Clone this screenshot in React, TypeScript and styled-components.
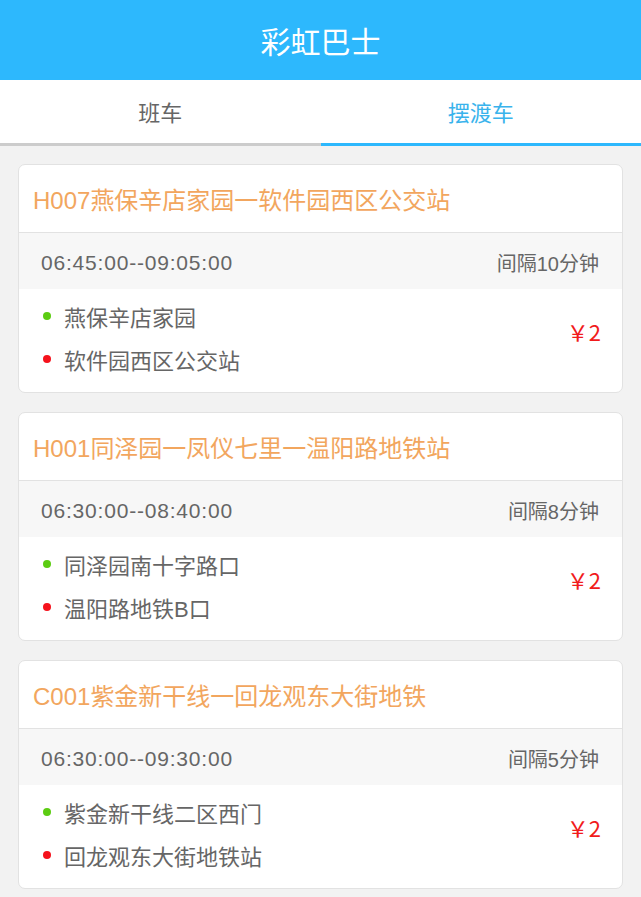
import styled, { createGlobalStyle } from "styled-components";

// colors
const colorPrimary = "#2db8fd";
const colorTitle = "#f2a65e";
const colorText = "#666666";
const colorPrice = "#f11b1b";
const colorBg = "#f2f2f2";

const GlobalStyle = createGlobalStyle`
  body {
    margin: 0;
    background: ${colorBg};
    font-family: "Liberation Sans", "Noto Sans CJK SC", sans-serif;
  }
`;

interface IStop {
  name: string;
  kind: "start" | "end";
}

interface IRoute {
  id: string;
  name: string;
  time: string;
  interval: string;
  price: number;
  stops: IStop[];
}

const routes: IRoute[] = [
  {
    id: "H007",
    name: "H007燕保辛店家园一软件园西区公交站",
    time: "06:45:00--09:05:00",
    interval: "间隔10分钟",
    price: 2,
    stops: [
      { name: "燕保辛店家园", kind: "start" },
      { name: "软件园西区公交站", kind: "end" },
    ],
  },
  {
    id: "H001",
    name: "H001同泽园一凤仪七里一温阳路地铁站",
    time: "06:30:00--08:40:00",
    interval: "间隔8分钟",
    price: 2,
    stops: [
      { name: "同泽园南十字路口", kind: "start" },
      { name: "温阳路地铁B口", kind: "end" },
    ],
  },
  {
    id: "C001",
    name: "C001紫金新干线一回龙观东大街地铁",
    time: "06:30:00--09:30:00",
    interval: "间隔5分钟",
    price: 2,
    stops: [
      { name: "紫金新干线二区西门", kind: "start" },
      { name: "回龙观东大街地铁站", kind: "end" },
    ],
  },
];

const App = () => {
  return (
    <>
      <GlobalStyle />
      <Header>彩虹巴士</Header>
      <Tabs>
        <Tab>班车</Tab>
        <Tab active>摆渡车</Tab>
      </Tabs>
      <List>
        {routes.map((route) => (
          <Card key={route.id}>
            <CardTitle>{route.name}</CardTitle>
            <TimeRow>
              <Time>{route.time}</Time>
              <span>{route.interval}</span>
            </TimeRow>
            <StopsRow>
              <Stops>
                {route.stops.map((stop) => (
                  <Stop key={stop.name}>
                    <Dot kind={stop.kind} />
                    {stop.name}
                  </Stop>
                ))}
              </Stops>
              <Price>￥{route.price}</Price>
            </StopsRow>
          </Card>
        ))}
      </List>
    </>
  );
};

const Header = styled.header`
  height: 80px;
  background-color: ${colorPrimary};
  color: #ffffff;
  font-size: 30px;
  display: flex;
  align-items: center;
  justify-content: center;
`;

const Tabs = styled.nav`
  display: flex;
  background: #ffffff;
`;

const Tab = styled.div<{ active?: boolean }>`
  flex: 1;
  height: 62px;
  padding-bottom: 1px;
  display: flex;
  align-items: center;
  justify-content: center;
  font-size: 22px;
  color: ${(p) => (p.active ? "#39b3ec" : colorText)};
  border-bottom: 3px solid ${(p) => (p.active ? colorPrimary : "#cccccc")};
`;

const List = styled.main`
  display: flex;
  flex-direction: column;
  gap: 19px;
  padding: 18px 18px 20px;
`;

const Card = styled.section`
  background: #ffffff;
  border: 1px solid #e2e2e2;
  border-radius: 7px;
  overflow: hidden;
`;

const CardTitle = styled.div`
  height: 67px;
  display: flex;
  align-items: center;
  padding: 0 14px;
  font-size: 24px;
  color: ${colorTitle};
  border-bottom: 1px solid #e2e2e2;
`;

const TimeRow = styled.div`
  height: 53px;
  padding: 3px 23px 0 22px;
  display: flex;
  align-items: center;
  justify-content: space-between;
  background: #f7f7f7;
  font-size: 20px;
  color: ${colorText};
`;

const Time = styled.span`
  font-size: 21px;
  letter-spacing: 0.8px;
`;

const StopsRow = styled.div`
  display: flex;
  align-items: center;
  justify-content: space-between;
  padding: 5px 21px 12px 24px;
`;

const Stops = styled.ul`
  list-style: none;
  margin: 0;
  padding: 0;
`;

const Stop = styled.li`
  display: flex;
  align-items: center;
  height: 43px;
  font-size: 22px;
  color: ${colorText};
`;

const Dot = styled.span<{ kind: "start" | "end" }>`
  width: 8px;
  height: 8px;
  border-radius: 50%;
  margin-right: 13px;
  background: ${(p) => (p.kind === "start" ? "#5ccc12" : "#f5121c")};
`;

const Price = styled.div`
  font-family: "Noto Sans CJK SC", "Liberation Sans", sans-serif;
  font-size: 22px;
  color: ${colorPrice};
  margin-bottom: 12px;
`;

export default App;
